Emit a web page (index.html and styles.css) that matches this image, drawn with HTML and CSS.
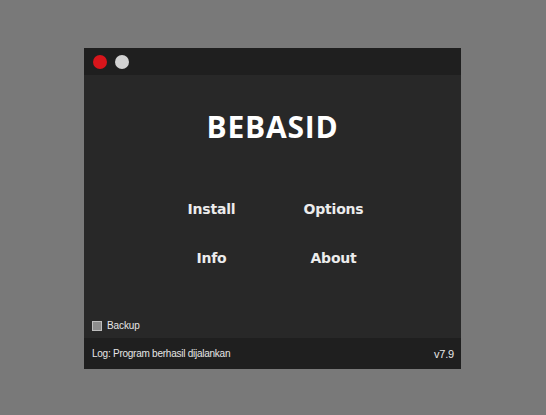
FILE: index.html
```html
<!DOCTYPE html>
<html>
<head>
<meta charset="utf-8">
<link rel="stylesheet" href="styles.css">
</head>
<body>
<div class="window">
  <div class="titlebar">
    <span class="dot dot-close"></span>
    <span class="dot dot-min"></span>
  </div>
  <div class="content">
    <h1 class="title">BEBASID</h1>
    <div class="menu">
      <div class="btn">Install</div>
      <div class="btn">Options</div>
      <div class="btn">Info</div>
      <div class="btn">About</div>
    </div>
    <label class="check"><span class="box"></span><span>Backup</span></label>
  </div>
  <div class="footer">
    <span>Log: Program berhasil dijalankan</span>
    <span class="ver">v7.9</span>
  </div>
</div>
</body>
</html>
```
FILE: styles.css
```css
html, body { margin: 0; padding: 0; }
body {
  background: #797979;
  width: 546px;
  height: 415px;
  padding-top: 48px;
  box-sizing: border-box;
  font-family: "DejaVu Sans", sans-serif;
}
.window {
  margin-left: 84px;
  width: 377px;
  height: 321px;
  background: #282828;
  display: flex;
  flex-direction: column;
}
.titlebar {
  height: 27px;
  background: #1f1f1f;
  display: flex;
  align-items: center;
  padding-left: 9px;
  gap: 8px;
}
.dot {
  width: 14px;
  height: 14px;
  border-radius: 50%;
}
.dot-close { background: #d8151b; }
.dot-min { background: #d2d2d2; }
.content {
  flex: 1;
  display: flex;
  flex-direction: column;
}
.title {
  margin: 35px 0 0 0;
  text-align: center;
  font-family: "Open Sans", sans-serif;
  font-weight: 700;
  font-size: 30px;
  line-height: 34px;
  letter-spacing: 0.8px;
  color: #ffffff;
  padding-left: 0;
}
.menu {
  margin-top: 55px;
  display: grid;
  grid-template-columns: 104px 104px;
  justify-content: center;
  column-gap: 18px;
  row-gap: 29px;
  margin-left: 0;
}
.btn {
  text-align: center;
  color: #ececec;
  font-family: "DejaVu Sans", sans-serif;
  font-weight: 700;
  font-size: 14px;
  line-height: 20px;
  letter-spacing: -0.2px;
}
.check {
  margin-top: auto;
  margin-bottom: 7px;
  margin-left: 8px;
  display: flex;
  align-items: center;
  gap: 5px;
  font-family: "Liberation Sans", sans-serif;
  font-size: 10px;
  color: #e6e6e6;
  letter-spacing: -0.1px;
}
.box {
  width: 8px;
  height: 8px;
  background: #8c8c8c;
  border: 1px solid #bdbdbd;
}
.footer {
  height: 31px;
  background: #1f1f1f;
  display: flex;
  align-items: center;
  justify-content: space-between;
  padding: 0 7px 0 8px;
  font-family: "Liberation Sans", sans-serif;
  font-size: 10px;
  color: #e6e6e6;
  letter-spacing: -0.25px;
}
.ver {
  font-size: 11px;
  letter-spacing: -0.2px;
}
```
